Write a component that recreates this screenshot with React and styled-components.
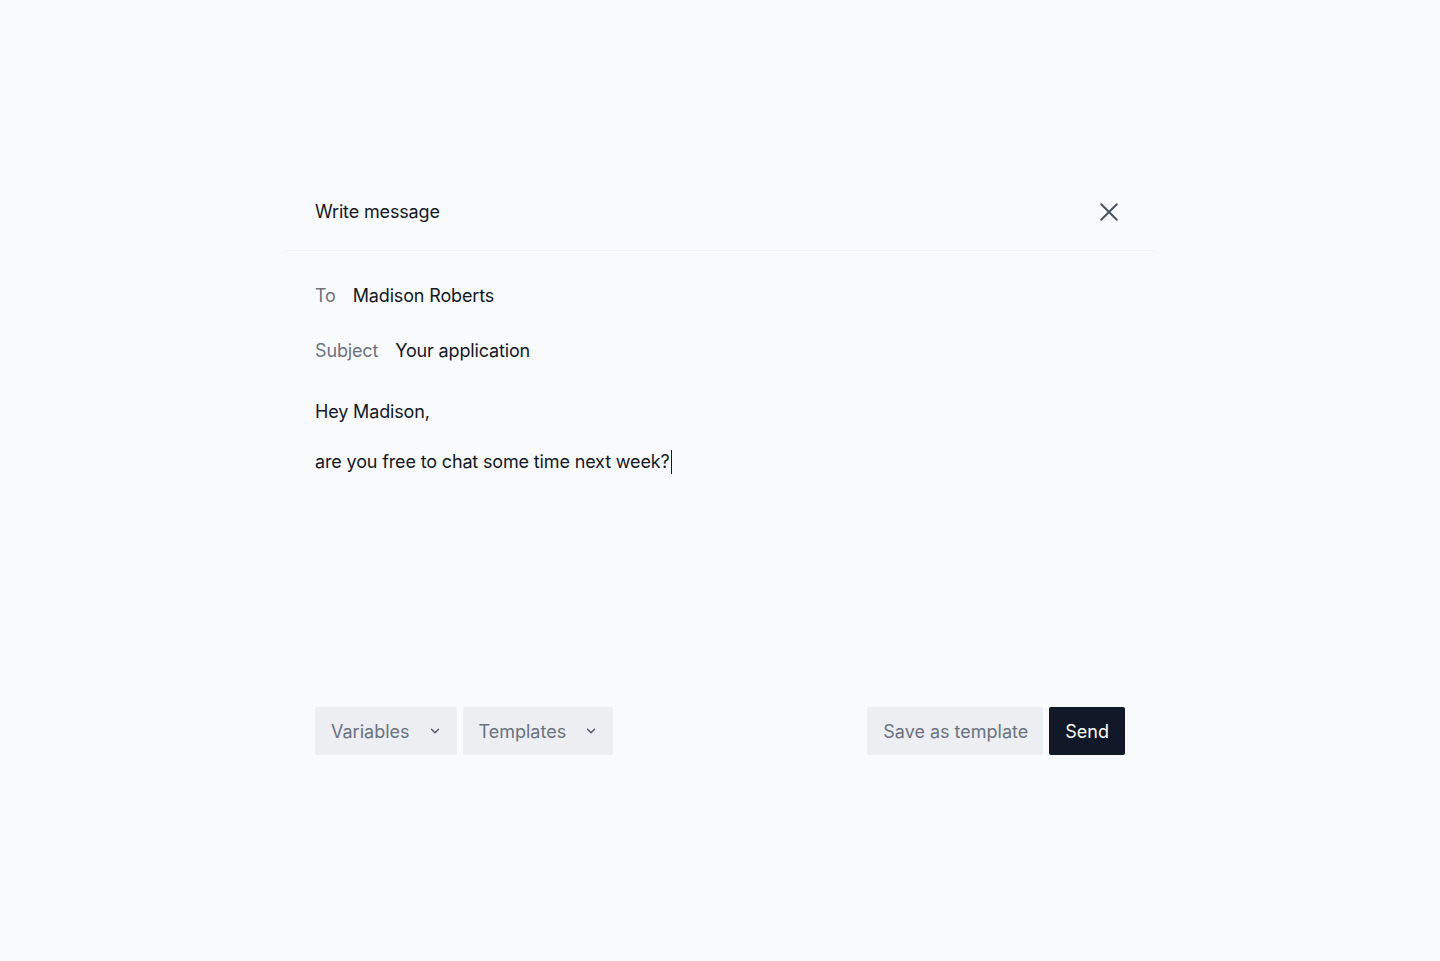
import React from 'react'
import styled, { createGlobalStyle } from 'styled-components'

const GlobalStyle = createGlobalStyle`
  html, body {
    margin: 0;
    padding: 0;
    background: #f9fafb;
  }
  body {
    font-family: Inter, "Liberation Sans", sans-serif;
    color: #111827;
    letter-spacing: -0.15px;
    -webkit-font-smoothing: antialiased;
  }
`

const Page = styled.div`
  min-height: 961px;
  display: flex;
  justify-content: center;
  padding-top: 173px;
  box-sizing: border-box;
`

const Panel = styled.div`
  width: 874px;
  display: flex;
  flex-direction: column;
`

const Header = styled.div`
  display: flex;
  align-items: center;
  justify-content: space-between;
  padding: 28px 32px 27px;
  border-bottom: 1px solid #f0f1f4;
`

const Title = styled.h2`
  margin: 0;
  font-size: 18px;
  line-height: 22px;
  font-weight: 400;
`

const CloseButton = styled.button`
  border: 0;
  background: none;
  padding: 0;
  width: 22px;
  height: 22px;
  margin-right: 5px;
  display: flex;
  align-items: center;
  justify-content: center;
  color: #4b5563;
  cursor: pointer;
`

const Content = styled.div`
  padding: 33px 32px 0;
  display: flex;
  flex-direction: column;
`

const Fields = styled.div`
  display: flex;
  flex-direction: column;
  gap: 31px;
`

const Field = styled.div`
  display: flex;
  align-items: center;
  font-size: 18px;
  line-height: 24px;
`

const Label = styled.span`
  color: #6b7280;
  margin-right: 17px;
`

const Value = styled.span`
  color: #111827;
`

const Body = styled.div`
  margin-top: 37px;
  min-height: 307px;
  font-size: 18px;
  line-height: 24px;

  p {
    margin: 0 0 26px;
  }
`

const Caret = styled.span`
  display: inline-block;
  width: 1px;
  height: 24px;
  background: #111827;
  vertical-align: top;
  margin-left: 1px;
`

const Footer = styled.div`
  display: flex;
  justify-content: space-between;
  align-items: center;
`

const Group = styled.div`
  display: flex;
  gap: 6px;
`

const Button = styled.button`
  height: 48px;
  border: 0;
  border-radius: 2px;
  display: flex;
  align-items: center;
  gap: ${p => (p.$menu ? '18px' : '0')};
  padding: 0 ${p => (p.$primary ? '16px' : '15px')} 0 16px;
  font-family: inherit;
  font-size: 18px;
  letter-spacing: 0;
  background: ${p => (p.$primary ? '#111827' : '#eceef1')};
  color: ${p => (p.$primary ? '#ffffff' : '#6b7280')};
  cursor: pointer;
`

const Chevron = () => (
  <svg width="14" height="14" viewBox="0 0 24 24" fill="none" stroke="#4b5563" strokeWidth="2.4" strokeLinecap="round" strokeLinejoin="round">
    <path d="M6 9l6 6 6-6" />
  </svg>
)

const CloseIcon = () => (
  <svg width="22" height="22" viewBox="0 0 24 24" fill="none" stroke="currentColor" strokeWidth="2.2" strokeLinecap="round">
    <path d="M3.5 3.5l17 17M20.5 3.5l-17 17" />
  </svg>
)

export default function App() {
  return (
    <>
      <GlobalStyle />
      <Page>
        <Panel>
          <Header>
            <Title>Write message</Title>
            <CloseButton aria-label="Close">
              <CloseIcon />
            </CloseButton>
          </Header>
          <Content>
            <Fields>
              <Field>
                <Label>To</Label>
                <Value>Madison Roberts</Value>
              </Field>
              <Field>
                <Label>Subject</Label>
                <Value>Your application</Value>
              </Field>
            </Fields>
            <Body>
              <p>Hey Madison,</p>
              <p>
                are you free to chat some time next week?<Caret />
              </p>
            </Body>
            <Footer>
              <Group>
                <Button $menu>
                  Variables <Chevron />
                </Button>
                <Button $menu>
                  Templates <Chevron />
                </Button>
              </Group>
              <Group>
                <Button>Save as template</Button>
                <Button $primary>Send</Button>
              </Group>
            </Footer>
          </Content>
        </Panel>
      </Page>
    </>
  )
}
